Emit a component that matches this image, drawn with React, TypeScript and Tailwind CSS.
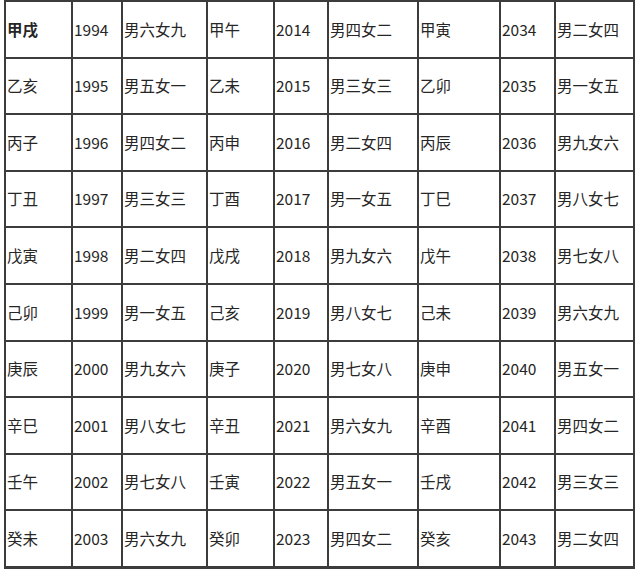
import React from "react";

const rows: string[][] = [
  ["甲戌", "1994", "男六女九", "甲午", "2014", "男四女二", "甲寅", "2034", "男二女四"],
  ["乙亥", "1995", "男五女一", "乙未", "2015", "男三女三", "乙卯", "2035", "男一女五"],
  ["丙子", "1996", "男四女二", "丙申", "2016", "男二女四", "丙辰", "2036", "男九女六"],
  ["丁丑", "1997", "男三女三", "丁酉", "2017", "男一女五", "丁巳", "2037", "男八女七"],
  ["戊寅", "1998", "男二女四", "戊戌", "2018", "男九女六", "戊午", "2038", "男七女八"],
  ["己卯", "1999", "男一女五", "己亥", "2019", "男八女七", "己未", "2039", "男六女九"],
  ["庚辰", "2000", "男九女六", "庚子", "2020", "男七女八", "庚申", "2040", "男五女一"],
  ["辛巳", "2001", "男八女七", "辛丑", "2021", "男六女九", "辛酉", "2041", "男四女二"],
  ["壬午", "2002", "男七女八", "壬寅", "2022", "男五女一", "壬戌", "2042", "男三女三"],
  ["癸未", "2003", "男六女九", "癸卯", "2023", "男四女二", "癸亥", "2043", "男二女四"],
];

export default function App() {
  return (
    <div
      className="w-[640px] h-[575px] bg-white pl-[4px] overflow-hidden"
      style={{ fontFamily: '"Noto Sans CJK SC", "Noto Sans", sans-serif' }}
    >
      <div className="w-[631px] border-t-2 border-l-2 border-b border-[#3c3c3c] grid grid-cols-[67px_50px_85px_67px_54px_90px_82px_55px_79px] grid-rows-[repeat(10,56.6px)]">
        {rows.map((r, i) =>
          r.map((c, j) => (
            <div
              key={`${i}-${j}`}
              className={`border-r-2 border-b-2 border-[#3c3c3c] flex items-center pl-px text-[15.5px] text-[#262626] leading-none ${
                i === 0 && j === 0 ? "font-bold" : ""
              }`}
            >
              {c}
            </div>
          ))
        )}
      </div>
    </div>
  );
}
